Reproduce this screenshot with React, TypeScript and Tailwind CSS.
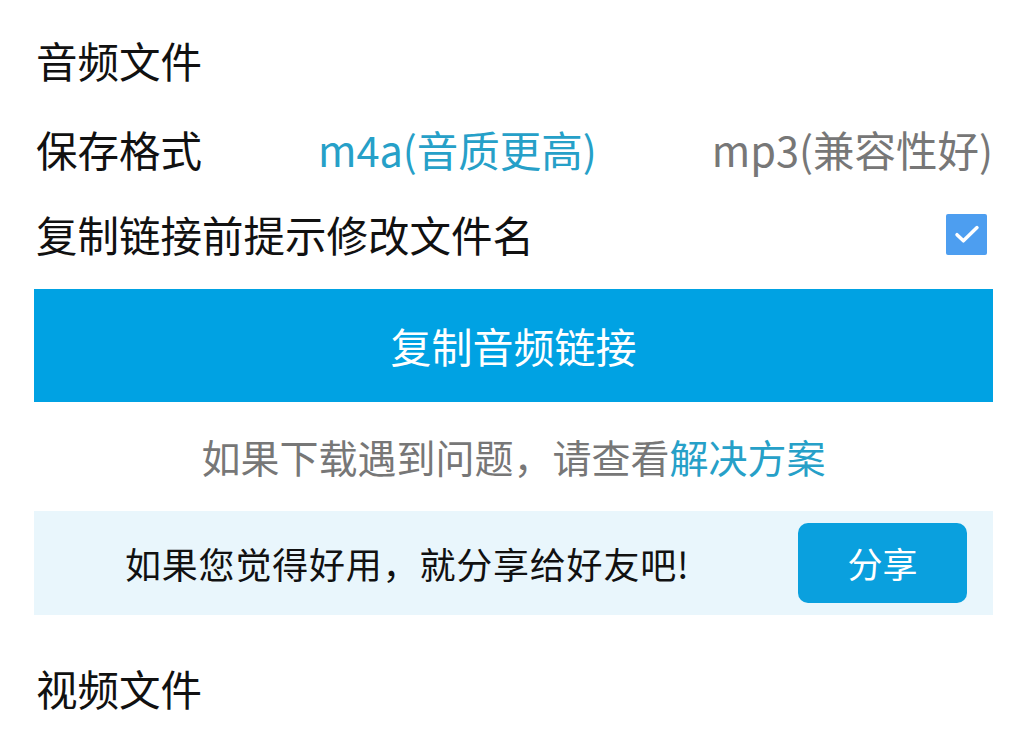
import React, { useState } from 'react';

const font = { fontFamily: '"Noto Sans CJK SC", "Noto Sans", sans-serif' };

export default function App() {
  const [format, setFormat] = useState<'m4a' | 'mp3'>('m4a');
  const [askRename, setAskRename] = useState(true);

  return (
    <div className="w-[1026px] h-[738px] bg-white overflow-hidden pl-[34px] pr-[33px] pt-[20px]" style={font}>
      {/* 音频文件 */}
      <div className="h-[80px] flex items-center pl-[2px] text-[41.5px] text-[#111]">音频文件</div>

      {/* 保存格式 */}
      <div className="h-[98px] flex items-center pl-[2px] text-[41.5px]">
        <span className="w-[282px] shrink-0 text-[#111]">保存格式</span>
        <button
          onClick={() => setFormat('m4a')}
          className={format === 'm4a' ? 'text-[#26a0c8]' : 'text-[#777]'}
        >
          m4a(音质更高)
        </button>
        <button
          onClick={() => setFormat('mp3')}
          className={'ml-auto ' + (format === 'mp3' ? 'text-[#26a0c8]' : 'text-[#777]')}
        >
          mp3(兼容性好)
        </button>
      </div>

      {/* 复制链接前提示修改文件名 */}
      <div className="h-[72px] flex items-center justify-between pl-[2px] pr-[6px] text-[41.5px] text-[#111]">
        <span>复制链接前提示修改文件名</span>
        <button
          onClick={() => setAskRename(!askRename)}
          className={
            'w-[41px] h-[41px] rounded-[2px] flex items-center justify-center ' +
            (askRename ? 'bg-[#4d9ef0]' : 'border-2 border-[#bbb] bg-white')
          }
        >
          {askRename && (
            <svg className="w-[32px] h-[32px] shrink-0" viewBox="0 0 24 24" fill="none">
              <path d="M4.5 12.5l4.8 4.6L19.5 7.2" stroke="white" strokeWidth="2.6" strokeLinecap="round" strokeLinejoin="round" />
            </svg>
          )}
        </button>
      </div>

      {/* 复制音频链接 */}
      <button className="mt-[19px] w-full h-[113px] bg-[#00a2e3] text-white text-[41px] flex items-center justify-center">
        复制音频链接
      </button>

      {/* 提示 */}
      <div className="h-[109px] flex items-center justify-center text-[39px] text-[#777]">
        如果下载遇到问题，请查看<span className="text-[#26a0c8]">解决方案</span>
      </div>

      {/* 分享 */}
      <div className="h-[104px] bg-[#e9f6fc] flex items-center justify-between pl-[91px] pr-[26px]">
        <span className="text-[36px] text-[#111] tracking-[0.8px]">如果您觉得好用，就分享给好友吧!</span>
        <button className="w-[169px] h-[80px] rounded-[10px] bg-[#0aa0de] text-white text-[35px] flex items-center justify-center">
          分享
        </button>
      </div>

      {/* 视频文件 */}
      <div className="mt-[33px] h-[80px] flex items-center pl-[2px] text-[41.5px] text-[#111]">视频文件</div>
    </div>
  );
}
